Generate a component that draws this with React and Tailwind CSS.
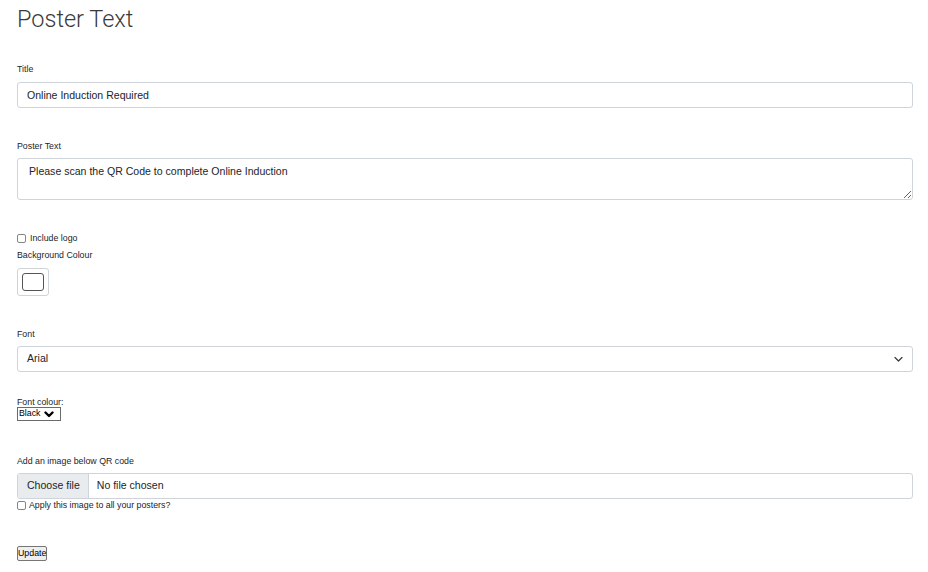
import React from 'react';

const Label = ({ children, className = '' }) => (
    <label className={`block text-[8.8px] leading-[12px] ${className}`}>{children}</label>
);

const Box = () => (
    <span className="block w-[9px] h-[9px] shrink-0 rounded-[2px] border border-[#858585] bg-white" />
);

const App = () => {
    return (
        <div className="min-h-screen bg-white pl-[17px] pr-[15px] pt-[5px] text-[#212529] font-['Liberation_Sans',Arial,sans-serif]">
            <h1 className="font-['Roboto',sans-serif] font-light text-[23.5px] leading-[29px] text-[#3a3a3a]">Poster Text</h1>

            {/* Title */}
            <Label className="mt-[29px]">Title</Label>
            <input
                defaultValue="Online Induction Required"
                className="mt-[7px] block w-full h-[26px] rounded-[3px] border border-[#ced4da] px-[9px] text-[10.56px] leading-[16px] text-[#212529] outline-none"
            />

            {/* Poster text */}
            <Label className="mt-[32px]">Poster Text</Label>
            <textarea
                defaultValue="Please scan the QR Code to complete Online Induction"
                className="mt-[6px] block w-full h-[42px] resize-y rounded-[3px] border border-[#ced4da] pl-[11px] pr-[9px] pt-[5px] text-[10.56px] leading-[15.84px] text-[#212529] outline-none"
            />

            {/* Logo + background */}
            <div className="mt-[32px] flex items-center gap-[4px] text-[8.8px] leading-[12px]">
                <Box />
                <span>Include logo</span>
            </div>
            <Label className="mt-[5px]">Background Colour</Label>
            <div className="mt-[7px] flex w-[32px] h-[28px] items-center justify-center rounded-[3px] border border-[#ced4da] bg-white">
                <span className="block w-[22px] h-[18px] rounded-[3px] border border-[#555] bg-white" />
            </div>

            {/* Font */}
            <Label className="mt-[32px]">Font</Label>
            <div className="mt-[6px] flex h-[26px] w-full items-center justify-between rounded-[3px] border border-[#ced4da] pl-[9px] pr-[9px] text-[10.56px]">
                <span>Arial</span>
                <svg width="9" height="6" viewBox="0 0 9 6" fill="none" stroke="#343a40" strokeWidth="1.2" strokeLinecap="round" strokeLinejoin="round">
                    <path d="M1 1.5l3.5 3.5 3.5-3.5" />
                </svg>
            </div>

            {/* Font colour */}
            <label className="mt-[25px] block text-[8.8px] leading-[10px]">Font colour:</label>
            <div className="flex h-[14px] w-[44px] items-center gap-[3px] border border-[#6b6b6b] bg-white pl-[1px] text-[8.8px] text-black">
                <span>Black</span>
                <svg width="10" height="7" viewBox="0 0 10 7" fill="none" stroke="#000" strokeWidth="2.4" strokeLinecap="round" strokeLinejoin="round">
                    <path d="M1.5 1.5l3.5 3.5 3.5-3.5" />
                </svg>
            </div>

            {/* Image */}
            <Label className="mt-[34px]">Add an image below QR code</Label>
            <div className="mt-[6px] flex h-[26px] w-full overflow-hidden rounded-[3px] border border-[#ced4da] text-[10.56px]">
                <span className="flex items-center border-r border-[#ced4da] bg-[#e9ecef] pl-[9px] pr-[8px]">Choose file</span>
                <span className="flex items-center pl-[8px]">No file chosen</span>
            </div>
            <div className="mt-[1px] flex items-center gap-[3px] text-[8.8px] leading-[11px]">
                <Box />
                <span>Apply this image to all your posters?</span>
            </div>

            <button className="mt-[35px] block h-[15px] w-[30px] rounded-[2px] border border-[#767676] bg-[#efefef] px-0 text-[8.8px] leading-[13px] text-black">
                Update
            </button>
        </div>
    );
};

export default App;
